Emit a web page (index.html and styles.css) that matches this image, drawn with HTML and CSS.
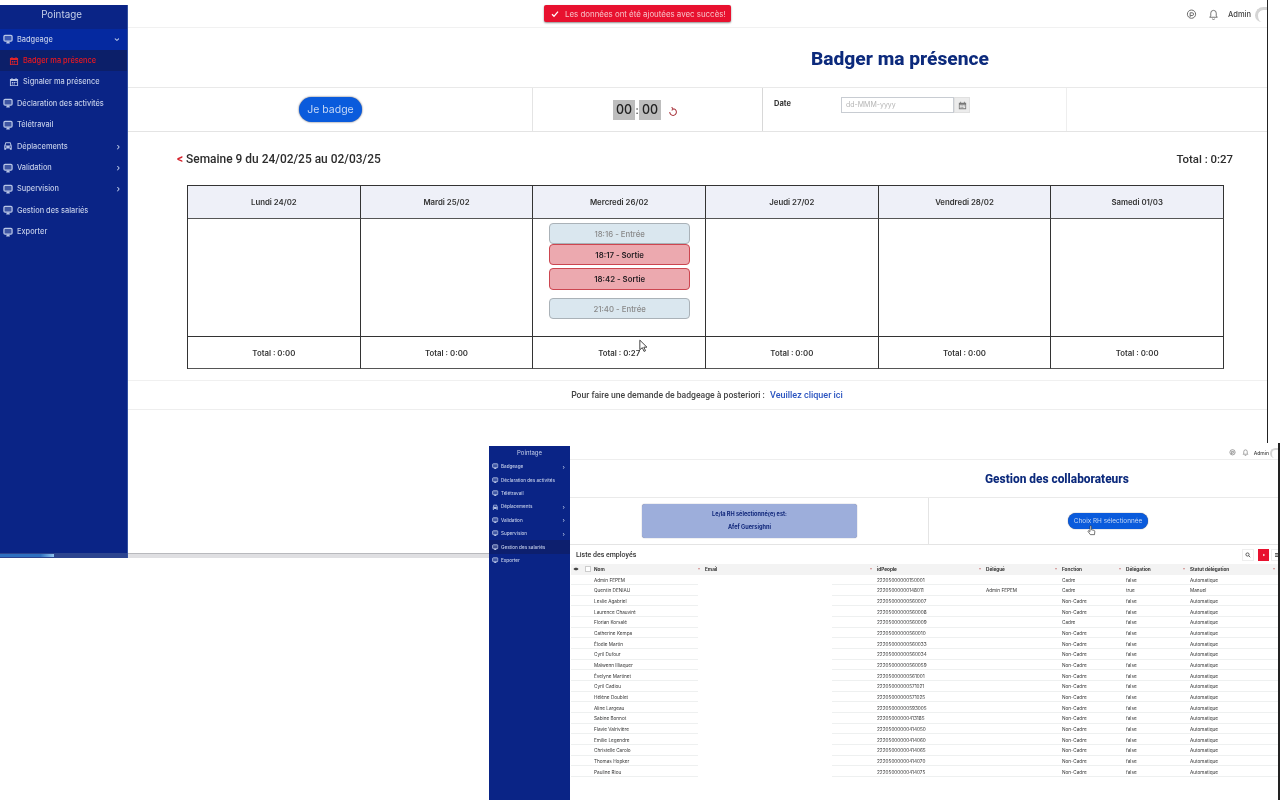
FILE: index.html
```html
<!DOCTYPE html>
<html lang="fr">
<head>
<meta charset="utf-8">
<title>Pointage</title>
<link rel="stylesheet" href="styles.css">
</head>
<body>
<svg class="defs" width="0" height="0" aria-hidden="true">
  <symbol id="i-screen" viewBox="0 0 16 16"><rect x="1.500" y="2" width="13" height="9.500" rx="1.800" fill="currentColor" fill-opacity=".3" stroke="currentColor" stroke-width="2"/><path d="M5 15h6l-1-3H6z" fill="currentColor"/></symbol>
  <symbol id="i-car" viewBox="0 0 16 16"><path d="M4 2h8l2 5.500V14h-3v-2H5v2H2V7.500zM5 3.500 4 7h8l-1-3.500zM4.500 8.500a1.200 1.200 0 1 0 0 2.400 1.200 1.200 0 0 0 0-2.400zm7 0a1.200 1.200 0 1 0 0 2.400 1.200 1.200 0 0 0 0-2.400z" fill="currentColor" fill-rule="evenodd"/></symbol>
  <symbol id="i-cal" viewBox="0 0 16 16"><path d="M1.500 3h13v11.500h-13zM3 6.500V13h10V6.500z" fill="currentColor" fill-rule="evenodd"/><path d="M4 1.500h1.500V4H4zM10.500 1.500H12V4h-1.500zM4.500 8h2v1.500h-2zM7.500 8h2v1.500h-2zM10.500 8h1.500v1.500h-1.500zM4.500 10.500h2V12h-2zM7.500 10.500h2V12h-2z" fill="currentColor"/></symbol>
  <symbol id="i-bell" viewBox="0 0 16 16"><path d="M8 2a4 4 0 0 0-4 4v4l-1.500 2h11L12 10V6a4 4 0 0 0-4-4zM6.500 14a1.500 1.500 0 0 0 3 0" fill="none" stroke="currentColor" stroke-width="1.300"/></symbol>
  <symbol id="i-gear" viewBox="0 0 16 16"><circle cx="8" cy="7.500" r="6" fill="none" stroke="currentColor" stroke-width="1.400"/><path d="M6 11.500V5.500h3a2 2 0 0 1 0 4H6" fill="none" stroke="currentColor" stroke-width="1.400"/></symbol>
</svg>

<main class="desk">
  <section class="win win-a">
    <aside class="side side-a">
      <h2 class="brand">Pointage</h2>
      <nav class="menu">
        <a class="item open"><svg class="ico"><use href="#i-screen"/></svg><span class="lbl">Badgeage</span><span class="chev down">›</span></a>
        <a class="item sub current"><svg class="ico"><use href="#i-cal"/></svg><span class="lbl">Badger ma présence</span></a>
        <a class="item sub"><svg class="ico"><use href="#i-cal"/></svg><span class="lbl">Signaler ma présence</span></a>
        <a class="item"><svg class="ico"><use href="#i-screen"/></svg><span class="lbl">Déclaration des activités</span></a>
        <a class="item"><svg class="ico"><use href="#i-screen"/></svg><span class="lbl">Télétravail</span></a>
        <a class="item"><svg class="ico"><use href="#i-car"/></svg><span class="lbl">Déplacements</span><span class="chev">›</span></a>
        <a class="item"><svg class="ico"><use href="#i-screen"/></svg><span class="lbl">Validation</span><span class="chev">›</span></a>
        <a class="item"><svg class="ico"><use href="#i-screen"/></svg><span class="lbl">Supervision</span><span class="chev">›</span></a>
        <a class="item"><svg class="ico"><use href="#i-screen"/></svg><span class="lbl">Gestion des salariés</span></a>
        <a class="item"><svg class="ico"><use href="#i-screen"/></svg><span class="lbl">Exporter</span></a>
      </nav>
      <div class="side-scroll"><span class="side-thumb"></span></div>
    </aside>
    <div class="body-a">
      <header class="top-a">
        <svg class="top-ico"><use href="#i-gear"/></svg>
        <svg class="top-ico"><use href="#i-bell"/></svg>
        <span class="admin">Admin</span>
        <span class="avatar"></span>
      </header>
      <h1 class="title-a">Badger ma présence</h1>
      <div class="tools">
        <div class="tool tool-btn"><button class="btn-badge">Je badge</button></div>
        <div class="tool tool-clock">
          <span class="digits">00</span><span class="colon">:</span><span class="digits">00</span>
          <svg class="refresh" viewBox="0 0 12 12"><path d="M3 3.500a4 4 0 1 0 5.500-.5M8.500 0.500V3.500H6" fill="none" stroke="#a8343c" stroke-width="1.200" transform="rotate(-40 6 6)"/></svg>
        </div>
        <div class="tool tool-date">
          <label class="date-lbl">Date</label>
          <div class="date-in">dd-MMM-yyyy</div>
          <div class="date-btn"><svg class="date-ico"><use href="#i-cal"/></svg></div>
        </div>
        <div class="tool tool-end"></div>
      </div>
      <div class="week">
        <h3 class="week-name"><span class="week-back">&lt;</span> Semaine 9 du 24/02/25 au 02/03/25</h3>
        <strong class="week-total">Total : 0:27</strong>
      </div>
      <div class="cal">
        <div class="cal-h">Lundi 24/02</div>
        <div class="cal-h">Mardi 25/02</div>
        <div class="cal-h">Mercredi 26/02</div>
        <div class="cal-h">Jeudi 27/02</div>
        <div class="cal-h">Vendredi 28/02</div>
        <div class="cal-h">Samedi 01/03</div>
        <div class="cal-b"></div>
        <div class="cal-b"></div>
        <div class="cal-b punches">
          <div class="punch in">18:16 - Entrée</div>
          <div class="punch out">18:17 - Sortie</div>
          <div class="punch out gap">18:42 - Sortie</div>
          <div class="punch in gap2">21:40 - Entrée</div>
        </div>
        <div class="cal-b"></div>
        <div class="cal-b"></div>
        <div class="cal-b"></div>
        <div class="cal-f">Total : 0:00</div>
        <div class="cal-f">Total : 0:00</div>
        <div class="cal-f">Total : 0:27</div>
        <div class="cal-f">Total : 0:00</div>
        <div class="cal-f">Total : 0:00</div>
        <div class="cal-f">Total : 0:00</div>
      </div>
      <p class="later">Pour faire une demande de badgeage à posteriori : <a class="later-link">Veuillez cliquer ici</a></p>
    </div>
    <div class="hscroll"></div>
  </section>

  <div class="toast"><svg class="toast-ico" viewBox="0 0 12 12"><path d="M1.500 6.500 4.500 9.500 10.500 2.500" fill="none" stroke="#fff" stroke-width="2"/></svg>Les données ont été ajoutées avec succès!</div>
  <div class="edge"></div>

  <section class="win win-b">
    <aside class="side side-b">
      <h2 class="brand">Pointage</h2>
      <nav class="menu">
        <a class="item"><svg class="ico"><use href="#i-screen"/></svg><span class="lbl">Badgeage</span><span class="chev">›</span></a>
        <a class="item"><svg class="ico"><use href="#i-screen"/></svg><span class="lbl">Déclaration des activités</span></a>
        <a class="item"><svg class="ico"><use href="#i-screen"/></svg><span class="lbl">Télétravail</span></a>
        <a class="item"><svg class="ico"><use href="#i-car"/></svg><span class="lbl">Déplacements</span><span class="chev">›</span></a>
        <a class="item"><svg class="ico"><use href="#i-screen"/></svg><span class="lbl">Validation</span><span class="chev">›</span></a>
        <a class="item"><svg class="ico"><use href="#i-screen"/></svg><span class="lbl">Supervision</span><span class="chev">›</span></a>
        <a class="item current-b"><svg class="ico"><use href="#i-screen"/></svg><span class="lbl">Gestion des salariés</span></a>
        <a class="item"><svg class="ico"><use href="#i-screen"/></svg><span class="lbl">Exporter</span></a>
      </nav>
    </aside>
    <div class="body-b">
      <header class="top-b">
        <svg class="top-ico-b"><use href="#i-gear"/></svg>
        <svg class="top-ico-b"><use href="#i-bell"/></svg>
        <span class="admin-b">Admin</span>
        <span class="avatar-b"></span>
      </header>
      <h1 class="title-b">Gestion des collaborateurs</h1>
      <div class="rh">
        <div class="rh-left">
          <div class="rh-box"><p class="rh-line">Le/la RH sélectionné(e) est:</p><p class="rh-line">Afef Guersighni</p></div>
        </div>
        <div class="rh-right"><button class="btn-rh">Choix RH sélectionnée</button></div>
      </div>
      <div class="list-head">
        <h3 class="list-title">Liste des employés</h3>
        <span class="tb tb-search"><svg viewBox="0 0 12 12" class="tb-ico"><circle cx="5" cy="5" r="3.200" fill="none" stroke="#333" stroke-width="1.500"/><path d="M7.500 7.500 10.500 10.500" stroke="#333" stroke-width="1.500"/></svg></span>
        <span class="tb tb-red"><svg viewBox="0 0 12 12" class="tb-ico"><path d="M3.500 2 9.500 6 3.500 10z" fill="#fff"/></svg></span>
        <span class="tb tb-menu"><svg viewBox="0 0 12 12" class="tb-ico"><path d="M2 3h8M2 6h8M2 9h8" stroke="#333" stroke-width="1.500"/></svg></span>
      </div>
      <div class="grid-wrap">
        <div class="row head">
          <span class="c-eye"><svg viewBox="0 0 12 12" class="eye"><path d="M1 6c2-3.500 8-3.500 10 0-2 3.500-8 3.500-10 0z" fill="#444"/></svg></span>
          <span class="c-chk"><i class="chk"></i></span>
          <span class="cell sort">Nom</span><span class="cell sort">Email</span><span class="cell sort">idPeople</span><span class="cell sort">Délégué</span><span class="cell sort">Fonction</span><span class="cell sort">Délégation</span><span class="cell sort">Statut délégation</span>
        </div>
        <div class="row"><span></span><span></span><span class="cell">Admin FEPEM</span><span class="cell"></span><span class="cell">22205000000150001</span><span class="cell"></span><span class="cell">Cadre</span><span class="cell">false</span><span class="cell">Automatique</span></div>
        <div class="row"><span></span><span></span><span class="cell">Quentin DENIAU</span><span class="cell"></span><span class="cell">22205000000148011</span><span class="cell">Admin FEPEM</span><span class="cell">Cadre</span><span class="cell">true</span><span class="cell">Manuel</span></div>
        <div class="row"><span></span><span></span><span class="cell">Leslie Agabriel</span><span class="cell"></span><span class="cell">22205000000560007</span><span class="cell"></span><span class="cell">Non-Cadre</span><span class="cell">false</span><span class="cell">Automatique</span></div>
        <div class="row"><span></span><span></span><span class="cell">Laurence Chauviré</span><span class="cell"></span><span class="cell">22205000000560008</span><span class="cell"></span><span class="cell">Non-Cadre</span><span class="cell">false</span><span class="cell">Automatique</span></div>
        <div class="row"><span></span><span></span><span class="cell">Florian Korsalé</span><span class="cell"></span><span class="cell">22205000000560009</span><span class="cell"></span><span class="cell">Cadre</span><span class="cell">false</span><span class="cell">Automatique</span></div>
        <div class="row"><span></span><span></span><span class="cell">Catherine Kempa</span><span class="cell"></span><span class="cell">22205000000560010</span><span class="cell"></span><span class="cell">Non-Cadre</span><span class="cell">false</span><span class="cell">Automatique</span></div>
        <div class="row"><span></span><span></span><span class="cell">Élodie Martin</span><span class="cell"></span><span class="cell">22205000000560033</span><span class="cell"></span><span class="cell">Non-Cadre</span><span class="cell">false</span><span class="cell">Automatique</span></div>
        <div class="row"><span></span><span></span><span class="cell">Cyril Dufour</span><span class="cell"></span><span class="cell">22205000000560034</span><span class="cell"></span><span class="cell">Non-Cadre</span><span class="cell">false</span><span class="cell">Automatique</span></div>
        <div class="row"><span></span><span></span><span class="cell">Maïwenn Illiaquer</span><span class="cell"></span><span class="cell">22205000000560059</span><span class="cell"></span><span class="cell">Non-Cadre</span><span class="cell">false</span><span class="cell">Automatique</span></div>
        <div class="row"><span></span><span></span><span class="cell">Évelyne Martinet</span><span class="cell"></span><span class="cell">22205000000561001</span><span class="cell"></span><span class="cell">Non-Cadre</span><span class="cell">false</span><span class="cell">Automatique</span></div>
        <div class="row"><span></span><span></span><span class="cell">Cyril Cadiou</span><span class="cell"></span><span class="cell">22205000000571021</span><span class="cell"></span><span class="cell">Non-Cadre</span><span class="cell">false</span><span class="cell">Automatique</span></div>
        <div class="row"><span></span><span></span><span class="cell">Hélène Doublet</span><span class="cell"></span><span class="cell">22205000000571025</span><span class="cell"></span><span class="cell">Non-Cadre</span><span class="cell">false</span><span class="cell">Automatique</span></div>
        <div class="row"><span></span><span></span><span class="cell">Aline Largeau</span><span class="cell"></span><span class="cell">22205000000593005</span><span class="cell"></span><span class="cell">Non-Cadre</span><span class="cell">false</span><span class="cell">Automatique</span></div>
        <div class="row"><span></span><span></span><span class="cell">Sabine Bonnot</span><span class="cell"></span><span class="cell">22205000000413185</span><span class="cell"></span><span class="cell">Non-Cadre</span><span class="cell">false</span><span class="cell">Automatique</span></div>
        <div class="row"><span></span><span></span><span class="cell">Flavie Valrivière</span><span class="cell"></span><span class="cell">22205000000414050</span><span class="cell"></span><span class="cell">Non-Cadre</span><span class="cell">false</span><span class="cell">Automatique</span></div>
        <div class="row"><span></span><span></span><span class="cell">Emilie Legendre</span><span class="cell"></span><span class="cell">22205000000414060</span><span class="cell"></span><span class="cell">Non-Cadre</span><span class="cell">false</span><span class="cell">Automatique</span></div>
        <div class="row"><span></span><span></span><span class="cell">Christelle Carolo</span><span class="cell"></span><span class="cell">22205000000414065</span><span class="cell"></span><span class="cell">Non-Cadre</span><span class="cell">false</span><span class="cell">Automatique</span></div>
        <div class="row"><span></span><span></span><span class="cell">Thomas Hopker</span><span class="cell"></span><span class="cell">22205000000414070</span><span class="cell"></span><span class="cell">Non-Cadre</span><span class="cell">false</span><span class="cell">Automatique</span></div>
        <div class="row"><span></span><span></span><span class="cell">Pauline Riou</span><span class="cell"></span><span class="cell">22205000000414075</span><span class="cell"></span><span class="cell">Non-Cadre</span><span class="cell">false</span><span class="cell">Automatique</span></div>
      </div>
    </div>
  </section>
  <div class="edge-b"></div>

  <svg class="cursor cursor-arrow" viewBox="0 0 12 16"><path d="M1 1v11.500l3-2.500 2 4.500 1.800-.8-2-4.300H9.500z" fill="#fff" stroke="#222" stroke-width="1"/></svg>
  <svg class="cursor cursor-hand" viewBox="0 0 12 14"><path d="M4 1.500a.9.900 0 0 1 1.800 0V6l3.500.8c.8.200 1.200.8 1.100 1.600L10 12.500H4.500L1.500 8.500c-.5-1 .6-1.600 1.300-1L4 8.500z" fill="#fff" stroke="#333" stroke-width=".9"/></svg>
</main>
</body>
</html>
```
FILE: styles.css
```css
* { box-sizing: border-box; }
html, body { margin: 0; height: 100%; background: #fff; overflow: hidden; }
body { font-family: Inter, "Liberation Sans", sans-serif; color: #222; }
.defs { position: absolute; }
h1, h2, h3, p { margin: 0; }
a { color: inherit; text-decoration: none; }
button { font-family: inherit; border: 0; }

.desk { position: relative; width: 1280px; height: 800px; overflow: hidden; background: #fff; }
.win { position: absolute; display: flex; background: #fff; overflow: hidden; filter: blur(.45px); }
.win-a { left: 0; top: 5px; width: 1267px; height: 553px; }
.win-b { left: 489px; top: 446px; width: 791px; height: 354px; }

/* sidebar */
.side { flex: none; background: #0a2486; color: #c3cde8; position: relative; display: flex; flex-direction: column; }
.side-a { width: 128px; border-right: 1px solid #33509f; }
.side-b { width: 81px; }
.brand { font-weight: 400; text-align: center; color: #c6d0ea; }
.side-a .brand { height: 23.500px; font-size: 9.800px; line-height: 20px; padding-right: 4px; }
.side-b .brand { height: 14px; font-size: 6px; line-height: 13px; }
.menu { display: flex; flex-direction: column; }
.item { display: flex; align-items: center; }
.side-a .item { height: 21.400px; padding: 0 7px 0 3px; font-size: 7.400px; font-weight: 500; }
.side-b .item { height: 13.400px; padding: 0 5px 0 3px; font-size: 4.600px; font-weight: 500; }
.ico { flex: none; color: #b9c6e6; }
.side-a .ico { width: 10px; height: 10px; margin-right: 4px; }
.side-b .ico { width: 6.500px; height: 6.500px; margin-right: 2.500px; }
.lbl { flex: 1; white-space: nowrap; }
.chev { flex: none; font-size: 9px; line-height: 1; color: #b9c6e6; }
.side-b .chev { font-size: 6px; }
.chev.down { transform: rotate(90deg); }
.item.open { background: #0529a0; }
.item.sub { padding-left: 9px; }
.side-a .item.sub .ico { margin-right: 4px; }
.item.current { background: #0c1f69; color: #f0181f; }
.item.current .ico { color: #e0242a; }
.current-b { background: #0d1f6e; }
.side-scroll { position: absolute; left: 0; right: 0; bottom: 0; height: 5px; background: #2c448f; }
.side-thumb { display: block; width: 54px; height: 3px; margin-top: 1px; background: linear-gradient(90deg, #2e6fc0 75%, #8fc3ef); }
.hscroll { position: absolute; left: 128px; right: 0; bottom: 0; height: 5px; background: #dfdfe2; border-top: 1px solid #b8b9bd; }

/* main A */
.body-a { flex: 1; min-width: 0; display: flex; flex-direction: column; }
.top-a { height: 23px; display: flex; align-items: center; justify-content: flex-end; border-bottom: 1px solid #f1f1f1; padding-bottom: 3px; color: #555; }
.top-ico { width: 11px; height: 11px; margin-right: 11px; color: #666; }
.top-ico + .top-ico { margin-right: 9px; }
.admin { font-size: 7.500px; font-weight: 500; color: #444; margin-right: 4px; }
.avatar { width: 12px; height: 15px; border: 3px solid #d5d5d5; border-right: 0; border-bottom: 0; border-radius: 10px 0 0 8px; }
.title-a { height: 59px; line-height: 61px; padding-left: 683px; font-family: Roboto, sans-serif; font-size: 19.200px; font-weight: 800; color: #0c2a7c; white-space: nowrap; }
.tools { height: 45px; display: flex; border-top: 1px solid #e9e9e9; border-bottom: 1px solid #e4e4e4; }
.tool { height: 100%; }
.tool-btn { width: 404px; display: flex; align-items: center; justify-content: center; padding-left: 1px; }
.btn-badge { width: 63px; height: 25px; border-radius: 13px; background: #0a5bdc; color: #c6d8f6; font-size: 10.500px; box-shadow: 0 0 2px #445; padding: 0; }
.tool-clock { width: 231px; display: flex; align-items: center; padding-left: 80px; border-left: 1px solid #e4e4e4; border-right: 1px solid #d8d8d8; }
.digits { width: 22px; height: 20px; background: #bdbdbd; color: #222; font-size: 12.500px; font-weight: 500; line-height: 20px; text-align: center; margin-top: 1px; }
.colon { width: 4px; font-size: 11px; text-align: center; }
.refresh { width: 10px; height: 10px; margin: 5px 0 0 7px; }
.tool-date { width: 304px; display: flex; align-items: flex-start; padding: 9px 0 0 11px; border-right: 1px solid #eee; }
.date-lbl { width: 67px; font-size: 7.500px; font-weight: 700; line-height: 14px; color: #333; }
.date-in { width: 113px; height: 16px; border: 1px solid #c8ccd2; font-size: 7px; line-height: 14px; color: #b5b5b5; padding-left: 4px; }
.date-btn { width: 16px; height: 16px; background: #ececec; border: 1px solid #e0e0e0; display: flex; align-items: center; justify-content: center; }
.date-ico { width: 9px; height: 9px; color: #777; }
.tool-end { flex: 1; }
.week { height: 53px; display: flex; align-items: center; justify-content: space-between; padding: 0 34px 0 49px; }
.week-name { font-family: Roboto, sans-serif; font-size: 11.950px; font-weight: 500; color: #2c2c2c; white-space: nowrap; }
.week-back { color: #d6222c; font-weight: 700; }
.week-total { font-family: Roboto, sans-serif; font-size: 11.400px; font-weight: 500; color: #2c2c2c; }
.cal { margin-left: 59px; width: 1037px; display: grid; grid-template-columns: repeat(6, 1fr); grid-template-rows: 33px 118px 32px; border: 1px solid #333; border-width: 1px 0 0 1px; }
.cal-h, .cal-f { display: flex; align-items: center; justify-content: center; font-size: 7.800px; font-weight: 600; color: #333; border-right: 1px solid #333; border-bottom: 1px solid #555; }
.cal-h { background: #eef0f8; }
.cal-b { border-right: 1px solid #333; border-bottom: 1px solid #333; }
.punches { padding: 4px 15px 0 16px; }
.punch { height: 21px; border-radius: 4px; display: flex; align-items: center; justify-content: center; font-size: 7.800px; font-weight: 500; }
.punch.in { background: #dae7ef; border: 1px solid #aab2b8; color: #888; }
.punch.out { background: #eca9af; border: 1.500px solid #cc4650; color: #2a2226; font-weight: 600; }
.punch.gap { margin-top: 3px; height: 22px; }
.punch.gap2 { margin-top: 8px; }
.later { margin-top: 11px; height: 30px; border-top: 1px solid #f0f0f0; border-bottom: 1px solid #eee; font-family: Roboto, sans-serif; font-size: 8.600px; line-height: 28px; text-align: center; color: #444; padding-left: 19px; font-weight: 500; }
.later-link { color: #2b54c0; margin-left: 3px; font-size: 9px; }

/* toast and page edges */
.toast { position: absolute; left: 544px; top: 5px; width: 187px; height: 17px; background: #e8112f; border-radius: 2px; box-shadow: 0 1px 2px rgba(0,0,0,.45); color: #f6c2c8; font-size: 7.900px; line-height: 16px; display: flex; align-items: center; white-space: nowrap; padding-left: 7px; filter: blur(.3px); }
.toast-ico { width: 8px; height: 8px; margin-right: 6px; }
.edge { position: absolute; left: 1267px; top: 0; width: 1px; height: 443px; background: #222; }
.edge-b { position: absolute; left: 1278px; top: 443px; width: 2px; height: 357px; background: #222; }

/* main B */
.body-b { width: 710px; flex: none; display: flex; flex-direction: column; }
.top-b { height: 14px; display: flex; align-items: center; justify-content: flex-end; border-bottom: 1px solid #eee; padding-right: 1px; }
.top-ico-b { width: 7px; height: 7px; margin-right: 6px; color: #666; }
.top-ico-b + .top-ico-b { margin-right: 5px; }
.admin-b { font-size: 5px; font-weight: 500; color: #444; margin-right: 1px; }
.avatar-b { width: 9px; height: 10px; border: 2px solid #d5d5d5; border-right: 0; border-bottom: 0; border-radius: 6px 0 0 5px; }
.title-b { height: 37px; line-height: 38px; padding-left: 415px; font-family: Roboto, sans-serif; font-size: 11.900px; font-weight: 800; color: #0c2a7c; white-space: nowrap; }
.rh { height: 48px; display: flex; border-top: 1px solid #eaeaea; border-bottom: 1px solid #e4e4e4; }
.rh-left { width: 359px; padding: 6px 0 0 72px; border-right: 1px solid #e4e4e4; }
.rh-box { width: 215px; height: 34px; border-radius: 3px; background: #9daedb; box-shadow: 0 0 1px #667; display: flex; flex-direction: column; justify-content: center; gap: 5.500px; }
.rh-line { text-align: center; font-size: 5.600px; font-weight: 700; color: #10277a; line-height: 7px; }
.rh-right { flex: 1; display: flex; padding: 15px 0 0 139px; }
.btn-rh { width: 80px; height: 16px; border-radius: 8px; background: #0a5bdc; color: #c6d8f6; font-size: 6.400px; padding: 0; white-space: nowrap; box-shadow: 0 0 1px #334; }
.list-head { height: 19px; display: flex; align-items: center; padding: 1px 0 0 6px; margin-right: -3px; }
.list-title { flex: 1; font-family: Roboto, sans-serif; font-size: 7px; font-weight: 500; color: #333; }
.tb { flex: none; width: 12px; height: 12px; display: flex; align-items: center; justify-content: center; }
.tb-search { border: 1px solid #eee; }
.tb-red { width: 11px; background: #e8112f; margin-left: 4px; }
.tb-red .tb-ico { width: 4px; height: 4px; }
.tb-menu { border: 1px solid #eee; margin-left: 2px; }
.tb-ico { width: 6px; height: 6px; }
.grid-wrap { width: 710px; padding-left: 1px; }
.row { display: grid; grid-template-columns: 14px 8px 111px 172px 109px 76px 64px 64px 90px; height: 10.670px; align-items: center; font-size: 4.700px; color: #333; background: linear-gradient(to right, #eef0f0 0, #eef0f0 127px, transparent 127px, transparent 261px, #eef0f0 261px) left bottom / 100% 1px no-repeat; }
.row.head { background: #f3f3f3; font-weight: 700; height: 10.500px; }
.cell { position: relative; white-space: nowrap; overflow: hidden; padding-left: 1px; }
.sort::after { content: ""; position: absolute; right: 4px; top: 2px; border: 1.500px solid transparent; border-top: 2px solid #d08a8a; }
.c-eye { display: flex; padding-left: 2px; }
.eye { width: 6px; height: 6px; }
.chk { display: block; width: 6px; height: 6px; background: #fff; border: 1px solid #ccc; }

/* pointers */
.cursor { position: absolute; }
.cursor-arrow { left: 639px; top: 339px; width: 10px; height: 14px; }
.cursor-hand { left: 1087px; top: 525px; width: 9px; height: 11px; }
```
